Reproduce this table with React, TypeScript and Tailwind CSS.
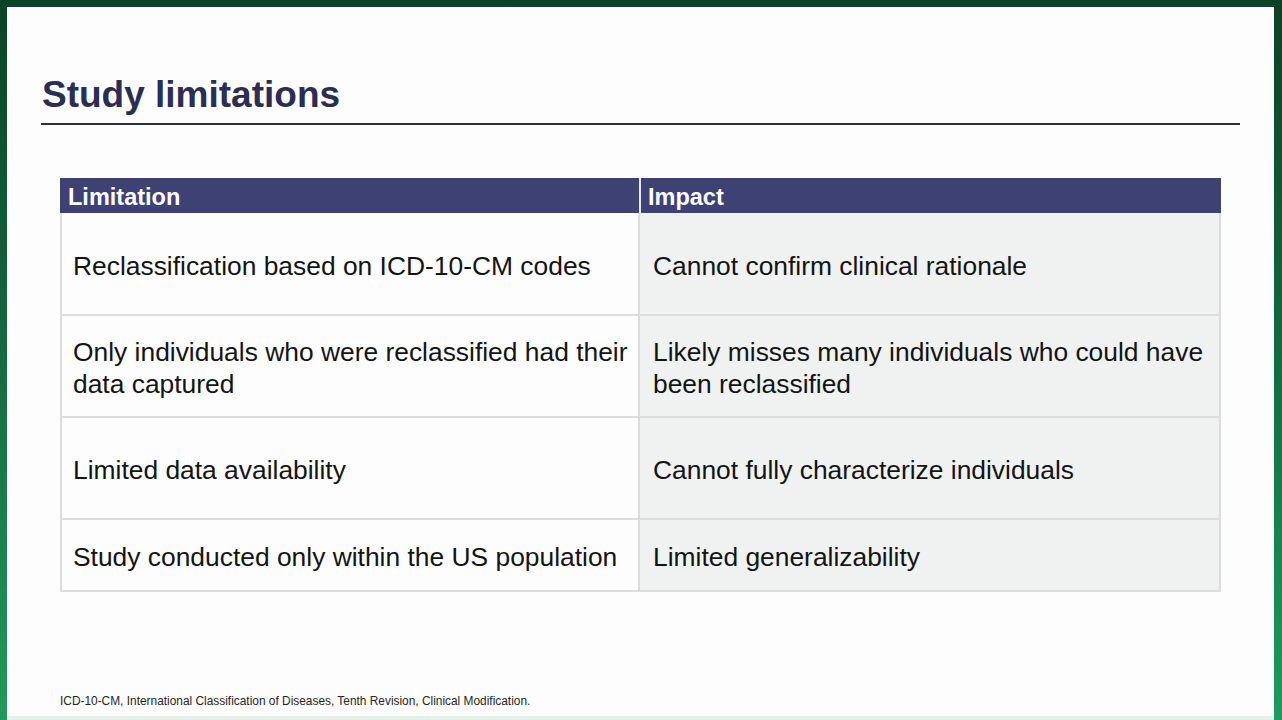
import React from "react";

const rows = [
  { l: "Reclassification based on ICD-10-CM codes", r: "Cannot confirm clinical rationale", h: "h-[103px]" },
  { l: "Only individuals who were reclassified had their data captured", r: "Likely misses many individuals who could have been reclassified", h: "h-[102px]" },
  { l: "Limited data availability", r: "Cannot fully characterize individuals", h: "h-[102px]" },
  { l: "Study conducted only within the US population", r: "Limited generalizability", h: "h-[72px]" },
];

export default function App() {
  return (
    <div
      className="w-[1282px] h-[720px] overflow-hidden flex bg-[linear-gradient(180deg,#0a4226_0%,#13673c_45%,#1f9a5e_100%)]"
      style={{ fontFamily: '"Liberation Sans", Arial, sans-serif' }}
    >
      <div className="ml-[7px] mt-[7px] w-[1267px] h-[713px] bg-[#fdfdfd] border-b-4 border-[#e3f1ea] flex flex-col">
        <h1 className="ml-[35px] mt-[69px] text-[37px] leading-none font-bold text-[#2b2d52]">
          Study limitations
        </h1>
        <div className="ml-[34px] mt-[10px] w-[1199px] h-[2px] bg-[#2f3033]" />
        <div className="ml-[53px] mt-[53px] w-[1161px] flex flex-col">
          <div className="flex h-[35px] bg-[#3e4174] text-white font-bold text-[23.5px] leading-[35px]">
            <div className="w-[579px] pl-[8px] pt-[2px]">Limitation</div>
            <div className="w-[2px] bg-[#e8e8ef]" />
            <div className="flex-1 pl-[7px] pt-[2px]">Impact</div>
          </div>
          <div className="flex flex-col border-l-2 border-r-2 border-[#dcdcdc]">
            {rows.map((row, i) => (
              <div key={i} className={`flex border-b-2 border-[#dcdcdc] ${row.h}`}>
                <div className="w-[578px] border-r-2 border-[#dcdcdc] bg-[#fdfdfd] pl-[11px] pr-[2px] pt-[4px] flex items-center text-[26.4px] leading-[32px] text-[#141414]">
                  {row.l}
                </div>
                <div className="flex-1 bg-[#eff2f1] pl-[13px] pr-[4px] pt-[4px] flex items-center text-[26.4px] leading-[32px] text-[#141414]">
                  {row.r}
                </div>
              </div>
            ))}
          </div>
        </div>
        <div className="ml-[53px] mt-[103px] text-[11.9px] leading-[13px] text-[#262626]">
          ICD-10-CM, International Classification of Diseases, Tenth Revision, Clinical Modification.
        </div>
      </div>
    </div>
  );
}
